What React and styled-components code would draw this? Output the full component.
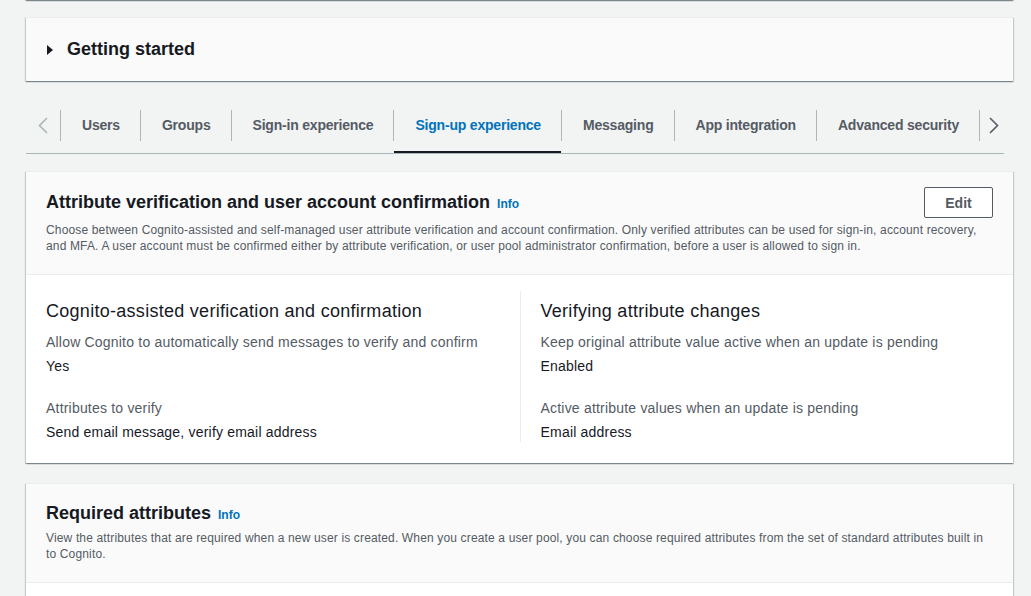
import React from "react";
import styled, { createGlobalStyle, css } from "styled-components";

const GlobalStyle = createGlobalStyle`
  body {
    margin: 0;
    background-color: #f2f3f3;
    font-family: "Liberation Sans", Arial, sans-serif;
    color: #16191f;
  }
`;

const Page = styled.div`
  padding: 0 18px 40px 26px;
  overflow: hidden;
  height: 596px;
  box-sizing: border-box;
`;

const Card = styled.div`
  box-sizing: border-box;
  background-color: #ffffff;
  border-top: 1px solid #eaeded;
  box-shadow: 0 1px 1px 0 rgba(0, 28, 36, 0.3),
    1px 1px 1px 0 rgba(0, 28, 36, 0.15),
    -1px 1px 1px 0 rgba(0, 28, 36, 0.15);
  margin-top: ${({ $top }) => $top || 0}px;
`;

const StubCard = styled(Card)`
  margin-top: -20px;
  height: 20px;
  background-color: #fafafa;
`;

const Expander = styled.div`
  background-color: #fafafa;
  height: 63px;
  display: flex;
  align-items: center;
  padding: 0 21px;
  gap: 14px;
  font-size: 18px;
  font-weight: 700;
`;

const Caret = styled.span`
  width: 0;
  height: 0;
  border-top: 5px solid transparent;
  border-bottom: 5px solid transparent;
  border-left: 6px solid #16191f;
`;

const TabBar = styled.div`
  margin-top: 16px;
  margin-right: 9px;
  height: 56px;
  display: flex;
  align-items: center;
  border-bottom: 1px solid #aab7b8;
`;

const ScrollButton = styled.div`
  width: ${({ $w }) => $w}px;
  flex-shrink: 0;
  height: 56px;
  display: flex;
  align-items: center;
  justify-content: center;
  color: ${({ $disabled }) => ($disabled ? "#aab7b8" : "#545b64")};
`;

const Separator = styled.span`
  width: 1px;
  height: 31px;
  background-color: #aab7b8;
  flex-shrink: 0;
`;

const Tab = styled.div`
  height: 56px;
  box-sizing: border-box;
  padding: 0 20px 0 21px;
  display: flex;
  align-items: center;
  font-size: 14px;
  font-weight: 700;
  letter-spacing: -0.2px;
  color: #545b64;
  white-space: nowrap;
  ${({ $active }) =>
    $active &&
    css`
      color: #0073bb;
      box-shadow: inset 0 -2px 0 #16191f;
    `}
`;

const Header = styled.div`
  background-color: #fafafa;
  padding: ${({ $pt }) => $pt}px 20px 20px;
  border-bottom: 1px solid #eaeded;
`;

const HeaderTop = styled.div`
  display: flex;
  align-items: center;
  justify-content: space-between;
  min-height: ${({ $h }) => $h || 22}px;
`;

const Title = styled.h2`
  margin: 0;
  font-size: 18px;
  line-height: 22px;
  font-weight: 700;
  color: #16191f;
`;

const Info = styled.span`
  font-size: 12px;
  font-weight: 700;
  color: #0073bb;
  margin-left: 7px;
`;

const Desc = styled.p`
  margin: 4px 0 0;
  font-size: 12px;
  line-height: 16px;
  letter-spacing: 0.15px;
  color: #545b64;
`;

const EditButton = styled.button`
  width: 69px;
  height: 31px;
  border: 1px solid #545b64;
  border-radius: 2px;
  background-color: #ffffff;
  font-family: inherit;
  font-size: 14px;
  font-weight: 700;
  color: #545b64;
`;

const Body = styled.div`
  padding: 16px 20px 21px;
  min-height: ${({ $min }) => $min || 0}px;
`;

const Columns = styled.div`
  display: grid;
  grid-template-columns: 1fr 1fr;
`;

const Column = styled.div`
  padding-top: 9px;
  ${({ $divider }) =>
    $divider &&
    css`
      border-left: 1px solid #eaeded;
      padding-left: 20px;
    `}
`;

const ColumnTitle = styled.h3`
  margin: 0;
  font-size: 18px;
  line-height: 22px;
  font-weight: 400;
  letter-spacing: 0.28px;
  color: #16191f;
`;

const Field = styled.div`
  margin-top: ${({ $first }) => ($first ? 10 : 22)}px;
  font-size: 14px;
  line-height: 20px;
  letter-spacing: 0.2px;
`;

const Label = styled.div`
  color: #545b64;
`;

const Value = styled.div`
  margin-top: 4px;
  color: #16191f;
`;

const Chevron = ({ dir }) => (
  <svg width="10" height="17" viewBox="0 0 10 17" fill="none">
    <path
      d={dir === "left" ? "M9 1 L1.5 8.5 L9 16" : "M1 1 L8.5 8.5 L1 16"}
      stroke="currentColor"
      strokeWidth="1.6"
    />
  </svg>
);

const tabs = [
  "Users",
  "Groups",
  "Sign-in experience",
  "Sign-up experience",
  "Messaging",
  "App integration",
  "Advanced security",
];

const columns = [
  {
    title: "Cognito-assisted verification and confirmation",
    fields: [
      ["Allow Cognito to automatically send messages to verify and confirm", "Yes"],
      ["Attributes to verify", "Send email message, verify email address"],
    ],
  },
  {
    title: "Verifying attribute changes",
    fields: [
      ["Keep original attribute value active when an update is pending", "Enabled"],
      ["Active attribute values when an update is pending", "Email address"],
    ],
  },
];

const App = () => {
  return (
    <>
      <GlobalStyle />
      <Page>
        <StubCard />

        <Card $top={17}>
          <Expander>
            <Caret />
            Getting started
          </Expander>
        </Card>

        <TabBar>
          <ScrollButton $w={34} $disabled>
            <Chevron dir="left" />
          </ScrollButton>
          {tabs.map((t) => (
            <React.Fragment key={t}>
              <Separator />
              <Tab $active={t === "Sign-up experience"}>{t}</Tab>
            </React.Fragment>
          ))}
          <Separator />
          <ScrollButton $w={27}>
            <Chevron dir="right" />
          </ScrollButton>
        </TabBar>

        <Card $top={17}>
          <Header $pt={15}>
            <HeaderTop $h={31}>
              <Title>
                Attribute verification and user account confirmation
                <Info>Info</Info>
              </Title>
              <EditButton>Edit</EditButton>
            </HeaderTop>
            <Desc>
              Choose between Cognito-assisted and self-managed user attribute
              verification and account confirmation. Only verified attributes
              can be used for sign-in, account recovery, and MFA. A user account
              must be confirmed either by attribute verification, or user pool
              administrator confirmation, before a user is allowed to sign in.
            </Desc>
          </Header>
          <Body>
            <Columns>
              {columns.map((c, i) => (
                <Column key={c.title} $divider={i > 0}>
                  <ColumnTitle>{c.title}</ColumnTitle>
                  {c.fields.map(([label, value], j) => (
                    <Field key={label} $first={j === 0}>
                      <Label>{label}</Label>
                      <Value>{value}</Value>
                    </Field>
                  ))}
                </Column>
              ))}
            </Columns>
          </Body>
        </Card>

        <Card $top={20}>
          <Header $pt={18}>
            <HeaderTop>
              <Title>
                Required attributes
                <Info>Info</Info>
              </Title>
            </HeaderTop>
            <Desc>
              View the attributes that are required when a new user is created.
              When you create a user pool, you can choose required attributes
              from the set of standard attributes built in to Cognito.
            </Desc>
          </Header>
          <Body $min={60} />
        </Card>
      </Page>
    </>
  );
};

export default App;
